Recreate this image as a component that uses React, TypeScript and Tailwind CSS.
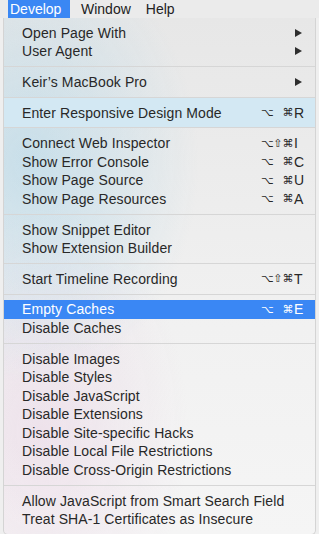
import React from "react";

type Item = { label: string; keys?: string[]; submenu?: boolean; active?: boolean };

// sections of the Develop menu, split by separators
const sections: { items: Item[]; tint?: boolean }[] = [
  { items: [{ label: "Open Page With", submenu: true }, { label: "User Agent", submenu: true }] },
  { items: [{ label: "Keir’s MacBook Pro", submenu: true }] },
  { items: [{ label: "Enter Responsive Design Mode", keys: ["⌥", "", "⌘", "R"] }], tint: true },
  {
    items: [
      { label: "Connect Web Inspector", keys: ["⌥", "⇧", "⌘", "I"] },
      { label: "Show Error Console", keys: ["⌥", "", "⌘", "C"] },
      { label: "Show Page Source", keys: ["⌥", "", "⌘", "U"] },
      { label: "Show Page Resources", keys: ["⌥", "", "⌘", "A"] },
    ],
  },
  { items: [{ label: "Show Snippet Editor" }, { label: "Show Extension Builder" }] },
  { items: [{ label: "Start Timeline Recording", keys: ["⌥", "⇧", "⌘", "T"] }] },
  { items: [{ label: "Empty Caches", keys: ["⌥", "", "⌘", "E"], active: true }, { label: "Disable Caches" }] },
  {
    items: [
      { label: "Disable Images" },
      { label: "Disable Styles" },
      { label: "Disable JavaScript" },
      { label: "Disable Extensions" },
      { label: "Disable Site-specific Hacks" },
      { label: "Disable Local File Restrictions" },
      { label: "Disable Cross-Origin Restrictions" },
    ],
  },
  { items: [{ label: "Allow JavaScript from Smart Search Field" }, { label: "Treat SHA-1 Certificates as Insecure" }] },
];

function Shortcut({ keys }: { keys: string[] }) {
  return (
    <div className="ml-auto flex items-center font-['DejaVu_Sans',sans-serif] text-[11px]">
      <span className="flex w-[11px] justify-center">{keys[0]}</span>
      <span className="flex w-[10px] justify-center">{keys[1]}</span>
      <span className="flex w-[10px] justify-center">{keys[2]}</span>
      <span className="w-[11px] pl-[1px] font-['Liberation_Sans',sans-serif] text-[14px]">{keys[3]}</span>
    </div>
  );
}

function Row({ item }: { item: Item }) {
  return (
    <div
      className={
        "flex h-[18.6px] items-center pl-[18px] pr-[11px] tracking-[0.1px] " +
        (item.active ? "bg-[#3a87f4] text-white" : "text-[#282828]")
      }
    >
      <span className="whitespace-nowrap">{item.label}</span>
      {item.keys && <Shortcut keys={item.keys} />}
      {item.submenu && (
        <svg className="ml-auto mr-[2px]" width="7" height="8" viewBox="0 0 7 8">
          <polygon points="0,0 7,4 0,8" fill="#2e2e2e" />
        </svg>
      )}
    </div>
  );
}

export default function App() {
  return (
    <div className="w-[319px] h-[534px] overflow-hidden bg-[#efefef] font-['Liberation_Sans',Arial,sans-serif] text-[14px] leading-none">
      {/* menu bar */}
      <div className="flex h-[18px] items-center bg-[#ebebeb] text-[#222]">
        <div className="ml-[8px] flex h-full w-[62px] items-center bg-[#3a87f4] pl-[2px] text-white">Develop</div>
        <div className="ml-[11px]">Window</div>
        <div className="ml-[15px]">Help</div>
      </div>
      {/* dropdown panel */}
      <div className="ml-[3px] w-[313px] rounded-b-[5px] border-x border-b border-[#d4d4d4] bg-[radial-gradient(ellipse_at_8%_28%,rgba(170,212,232,0.55),transparent_42%),radial-gradient(ellipse_at_12%_80%,rgba(232,206,226,0.45),transparent_38%),linear-gradient(to_bottom,#e7e7e7,#f1f1f1_60%,#f5f5f5)]">
        {sections.map((s, i) => (
          <div key={i}>
            {i > 0 && <div className="h-px bg-[#d6d6d6]" />}
            <div className={"py-[5.5px] " + (s.tint ? "bg-[#d3e8f3]" : "")}>
              {s.items.map((it) => (
                <Row key={it.label} item={it} />
              ))}
            </div>
          </div>
        ))}
      </div>
    </div>
  );
}
